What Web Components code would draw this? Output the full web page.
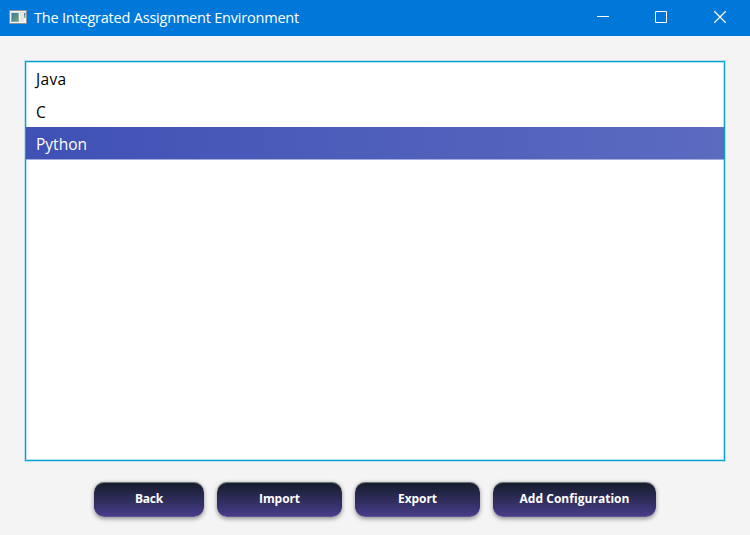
<!DOCTYPE html>
<html lang="en">
<head>
<meta charset="utf-8">
<title>The Integrated Assignment Environment</title>
<style>
html,body{margin:0;height:100%;overflow:hidden;background:#f4f4f4}
body{font-family:"Open Sans","Noto Sans",sans-serif}
</style>
</head>
<body>
<app-window>
  <title-bar slot="title"><fit-text width="265">The Integrated Assignment Environment</fit-text></title-bar>
  <list-view>
    <list-item><fit-text width="30.5">Java</fit-text></list-item>
    <list-item><fit-text width="10">C</fit-text></list-item>
    <list-item selected><fit-text width="51">Python</fit-text></list-item>
  </list-view>
  <action-button slot="actions" style="width:110px"><fit-text width="28">Back</fit-text></action-button>
  <action-button slot="actions" style="width:125px"><fit-text width="41">Import</fit-text></action-button>
  <action-button slot="actions" style="width:125px"><fit-text width="39">Export</fit-text></action-button>
  <action-button slot="actions" style="width:163px"><fit-text width="110">Add Configuration</fit-text></action-button>
</app-window>
<script>
class Base extends HTMLElement {
  constructor() {
    super();
    this.attachShadow({mode: "open"}).innerHTML = this.constructor.markup;
  }
}
customElements.define("app-window", class extends Base {
  static markup = `<style>
    :host{display:flex;flex-direction:column;height:535px;width:750px;background:#f4f4f4}
    main{flex:1;display:flex;flex-direction:column;padding:25px 25px 18px;box-sizing:border-box}
    footer{display:flex;justify-content:center;gap:13px;padding-top:21px}
    ::slotted(list-view){flex:1}
  </style><slot name="title"></slot><main><slot></slot><footer><slot name="actions"></slot></footer></main>`;
});
customElements.define("title-bar", class extends Base {
  static markup = `<style>
    :host{display:flex;align-items:center;height:36px;flex:none;background:#0078d9;color:#fff;font-size:14.5px;line-height:20px}
    svg{display:block;flex:none}
    .app{margin:0 7px 2px 9px}
    .controls{margin-left:auto}
  </style>
  <svg class="app" width="18" height="16" viewBox="0 0 18 16">
    <defs><linearGradient id="g" x1="0" y1="0" x2="1" y2="1"><stop stop-color="#44769c"/><stop offset="1" stop-color="#5aac6c"/></linearGradient>
    <linearGradient id="h" x1="0" y1="0" x2="0" y2="1"><stop stop-color="#3c86a0"/><stop offset="1" stop-color="#7cc08a"/></linearGradient></defs>
    <path fill="#8b9299" d="M0 1h18v14H0z"/>
    <path fill="#f5f5f5" d="M1 2h16v12H1z"/>
    <path fill="#dadde0" d="M1 3h16v1H1z"/>
    <path fill="#98a9a9" d="M2 4h8v9H2z"/>
    <path fill="url(#g)" d="M3 4h6v8H3z"/>
    <path fill="#e6e6e6" d="M11 4h4v9h-4z"/>
    <path fill="url(#h)" d="M15 4h1.500v5H15z"/>
  </svg>
  <slot></slot>
  <svg class="controls" width="153" height="36" viewBox="0 0 153 36" fill="none" stroke="#fff">
    <path d="M0 16.500h12M58.500 11.500h11v11h-11z"/><path stroke-width="1.250" d="M117.300 11.300l11.400 11.400m0-11.400l-11.400 11.400"/>
  </svg>`;
});
customElements.define("list-view", class extends Base {
  static markup = `<style>
    :host{display:block;box-sizing:border-box;background:#fff;border:1px solid #0a9fd3;box-shadow:0 0 0 1px #bde0ec,inset 0 0 0 1px #b5e3f0;font-size:15.500px;line-height:20px}
  </style><slot></slot>`;
});
customElements.define("list-item", class extends Base {
  static markup = `<style>
    :host{display:flex;align-items:center;height:32.5px;padding:1.600px 0 0 10px;color:#000;box-sizing:border-box}
    :host([selected]){height:33px;padding-top:2px;border-bottom:1px solid #a6addb;color:#fff;background:linear-gradient(90deg,#3f51b5,#5c6bc0)}
  </style><slot></slot>`;
});
customElements.define("action-button", class extends Base {
  static markup = `<style>
    :host{display:flex;align-items:center;justify-content:center;height:35px;box-sizing:border-box;padding-bottom:2px;border-radius:10px;color:#fff;font-size:12px;font-weight:700;line-height:17px;background:linear-gradient(#141c29,#483d8b);box-shadow:inset 0 1px 0 rgba(244,244,244,.4),inset 0 -1px 0 rgba(244,244,244,.12),0 1.500px 4px rgba(0,0,0,.4)}
  </style><slot></slot>`;
});
// Spaces its letters so that the label takes exactly the given width.
customElements.define("fit-text", class extends Base {
  static markup = `<style>:host{display:block;white-space:pre}span{display:inline-block}</style><span><slot></slot></span>`;
  connectedCallback() {
    const span = this.shadowRoot.querySelector("span");
    const target = Number(this.getAttribute("width"));
    const count = this.textContent.length;
    this.style.width = target + "px";
    span.style.letterSpacing = (target - span.getBoundingClientRect().width) / count + "px";
  }
});
</script>
</body>
</html>
